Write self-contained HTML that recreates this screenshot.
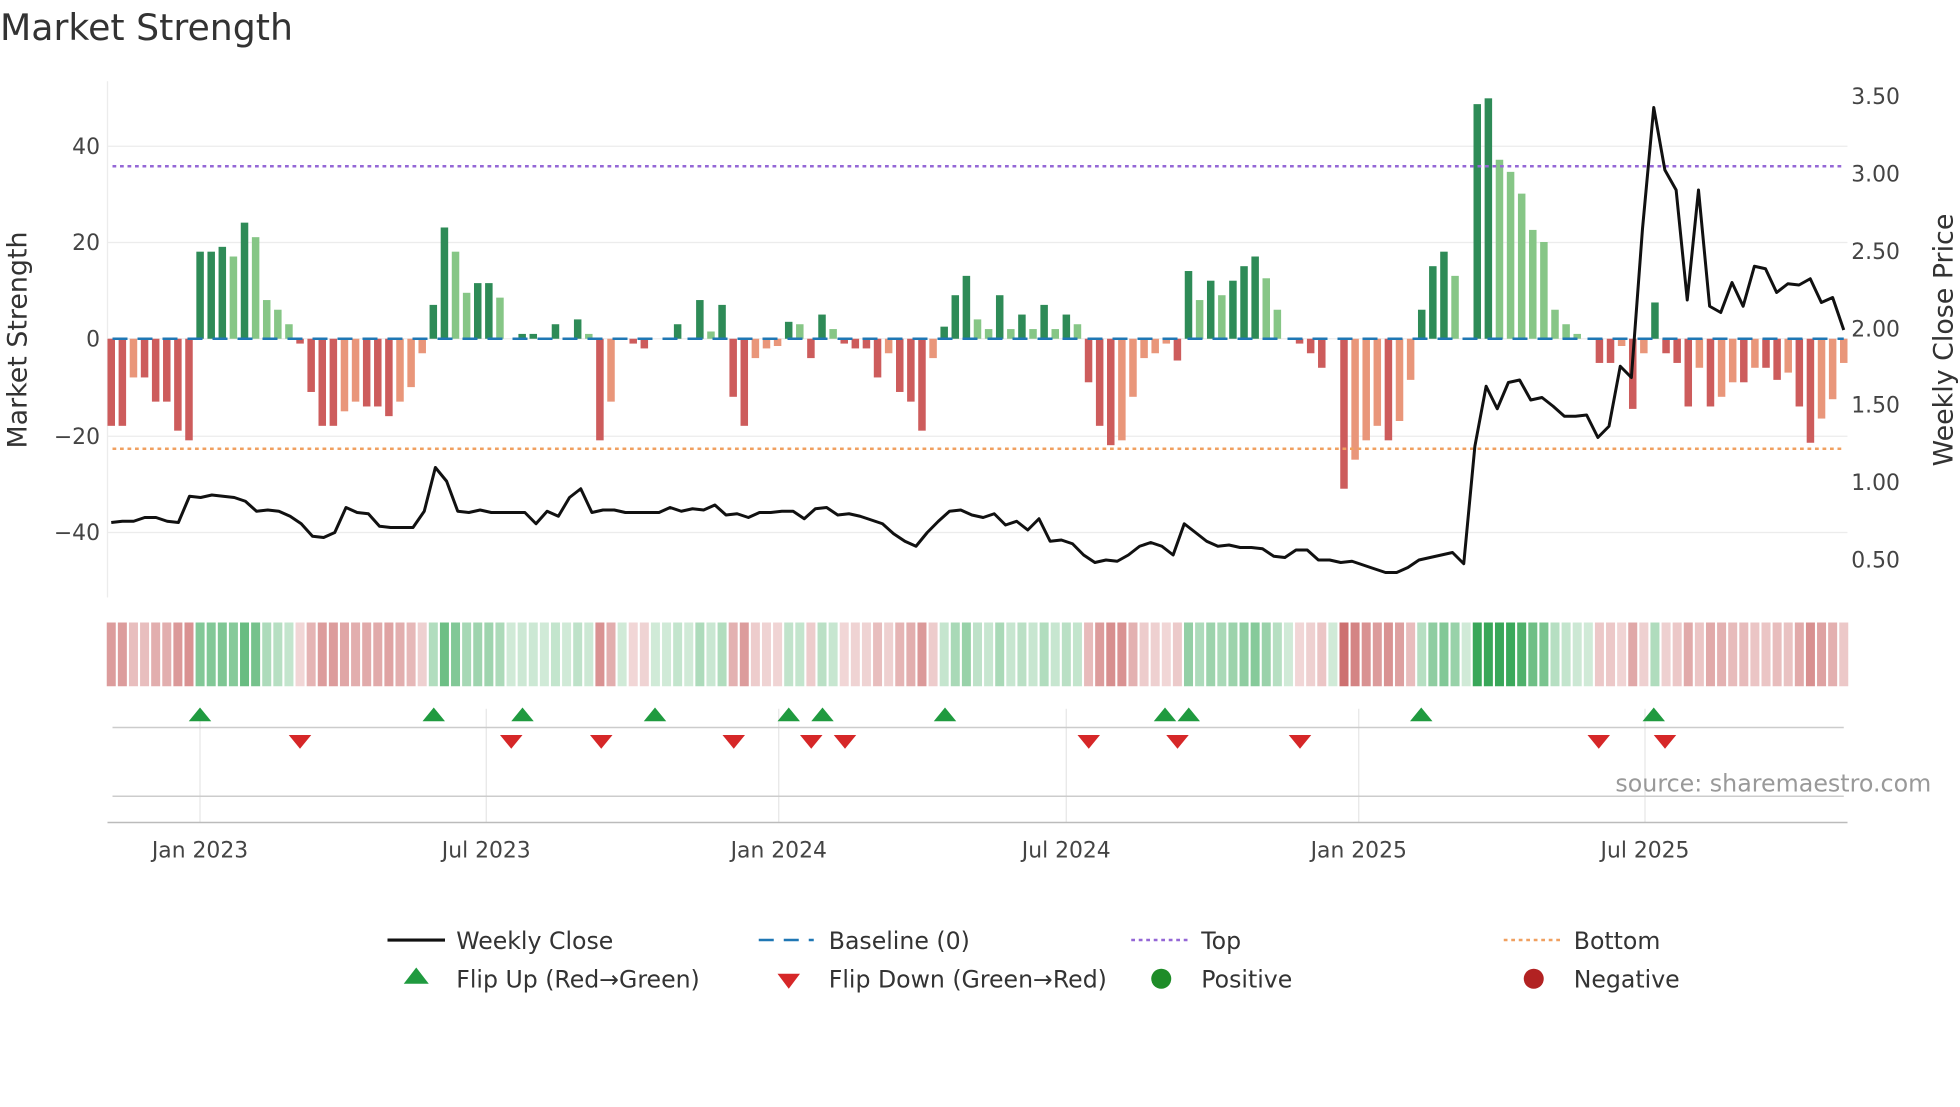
<!DOCTYPE html>
<html><head><meta charset="utf-8">
<style>
html,body{margin:0;padding:0;background:#fff;}
body{width:1960px;height:1102px;overflow:hidden;font-family:"Liberation Sans","DejaVu Sans",sans-serif;}
svg text{font-family:"DejaVu Sans","Liberation Sans",sans-serif;}
</style></head><body>
<svg id="s" width="1960" height="1102" viewBox="0 0 1568 881.6" xmlns="http://www.w3.org/2000/svg">
<rect width="1568" height="882" fill="#fff"/>
<text x="0" y="32" font-size="29" fill="#333">Market Strength</text>
<g id="grid"></g>
<g id="heat"></g>
<g id="bars"></g>
<g id="lines"></g>
<g id="marks"></g>
<g font-size="17.5" fill="#444">
<text x="80" y="123" text-anchor="end">40</text>
<text x="80" y="200" text-anchor="end">20</text>
<text x="80" y="277" text-anchor="end">0</text>
<text x="80" y="355" text-anchor="end">−20</text>
<text x="80" y="432" text-anchor="end">−40</text>
<text x="1481" y="83">3.50</text>
<text x="1481" y="145">3.00</text>
<text x="1481" y="207">2.50</text>
<text x="1481" y="269">2.00</text>
<text x="1481" y="330">1.50</text>
<text x="1481" y="392">1.00</text>
<text x="1481" y="454">0.50</text>
<text x="160" y="686" text-anchor="middle">Jan 2023</text>
<text x="389" y="686" text-anchor="middle">Jul 2023</text>
<text x="623" y="686" text-anchor="middle">Jan 2024</text>
<text x="853" y="686" text-anchor="middle">Jul 2024</text>
<text x="1087" y="686" text-anchor="middle">Jan 2025</text>
<text x="1316" y="686" text-anchor="middle">Jul 2025</text>
</g>
<text transform="translate(21,272) rotate(-90)" font-size="21.5" fill="#333" text-anchor="middle">Market Strength</text>
<text transform="translate(1562,272) rotate(-90)" font-size="21.5" fill="#333" text-anchor="middle">Weekly Close Price</text>
<text x="1545" y="633" font-size="19" fill="#999" text-anchor="end">source: sharemaestro.com</text>
<g font-size="18.9" fill="#333">
<line x1="310" y1="752" x2="356" y2="752" stroke="#111" stroke-width="2.5"/>
<text x="365" y="759">Weekly Close</text>
<line x1="607" y1="752" x2="651" y2="752" stroke="#1f77b4" stroke-width="2" stroke-dasharray="12,8"/>
<text x="663" y="759">Baseline (0)</text>
<line x1="905" y1="752" x2="950" y2="752" stroke="#9467d6" stroke-width="2" stroke-dasharray="3,3"/>
<text x="961" y="759">Top</text>
<line x1="1203" y1="752" x2="1248" y2="752" stroke="#f0a060" stroke-width="2" stroke-dasharray="3,3"/>
<text x="1259" y="759">Bottom</text>
<polygon points="333,774 343,787 323,787" fill="#1f9a3f"/>
<text x="365" y="790">Flip Up (Red→Green)</text>
<polygon points="622,779 640,779 631,791" fill="#d62728"/>
<text x="663" y="790">Flip Down (Green→Red)</text>
<circle cx="929" cy="783" r="8" fill="#1e8c28"/>
<text x="961" y="790">Positive</text>
<circle cx="1227" cy="783" r="8" fill="#b22222"/>
<text x="1259" y="790">Negative</text>
</g>
</svg>
<script>
var NS="http://www.w3.org/2000/svg";
function el(p,t,a){var e=document.createElementNS(NS,t);for(var k in a)e.setAttribute(k,a[k]);document.getElementById(p).appendChild(e);return e;}
var V=[-18,-18,-8,-8,-13,-13,-19,-21,18,18,19,17,24,21,8,6,3,-1,-11,-18,-18,-15,-13,-14,-14,-16,-13,-10,-3,7,23,18,9.5,11.5,11.5,8.5,0,1,1,0,3,0,4,1,-21,-13,0,-1,-2,0,0,3,0,8,1.5,7,-12,-18,-4,-2,-1.5,3.5,3,-4,5,2,-1,-2,-2,-8,-3,-11,-13,-19,-4,2.5,9,13,4,2,9,2,5,2,7,2,5,3,-9,-18,-22,-21,-12,-4,-3,-1,-4.5,14,8,12,9,12,15,17,12.5,6,0,-1,-3,-6,0,-31,-25,-21,-18,-21,-17,-8.5,6,15,18,13,0,48.5,49.7,37,34.5,30,22.5,20,6,3,1,0,-5,-5,-1.5,-14.5,-3,7.5,-3,-5,-14,-6,-14,-12,-9,-9,-6,-6,-8.5,-7,-14,-21.5,-16.5,-12.5,-5];
var n=V.length,x0=89,x1=1475,dx=(x1-x0)/(n-1),y0=271,k=3.87;
[117,194,271,349,426].forEach(function(y){el("grid","line",{x1:86,x2:1478,y1:y,y2:y,stroke:"#ececec","stroke-width":1});});
el("grid","line",{x1:86,x2:86,y1:65,y2:478,stroke:"#ececec"});
[160,389,623,853,1087,1316].forEach(function(x){el("grid","line",{x1:x,x2:x,y1:567,y2:658,stroke:"#e6e6e6"});});
el("grid","line",{x1:90,x2:1475,y1:582,y2:582,stroke:"#ccc","stroke-width":1.2});
el("grid","line",{x1:90,x2:1475,y1:637,y2:637,stroke:"#ccc","stroke-width":1.2});
el("grid","line",{x1:86,x2:1478,y1:658,y2:658,stroke:"#bbb","stroke-width":1.2});
for(var i=0;i<n;i++){var v=V[i],p=i?V[i-1]:v,x=x0+dx*i,c;
 if(v>0)c=(v>=p)?"#2e8b57":"#86c686";else c=(v<=p)?"#cd5c5c":"#e9967a";
 if(v!=0)el("bars","rect",{x:x-3,y:v>0?y0-v*k:y0,width:6,height:Math.abs(v)*k,fill:c});
 var a=0.22+0.7*Math.min(Math.abs(v)/35,1),hc=v>=0?"rgba(40,160,75,"+a+")":"rgba(195,85,85,"+a+")";
 el("heat","rect",{x:x-3.6,y:498,width:7.2,height:51,fill:hc});
}
el("lines","line",{x1:90,x2:1475,y1:271,y2:271,stroke:"#1f77b4","stroke-width":2,"stroke-dasharray":"12,8"});
el("lines","line",{x1:90,x2:1475,y1:133,y2:133,stroke:"#9467d6","stroke-width":2,"stroke-dasharray":"3,3"});
el("lines","line",{x1:90,x2:1475,y1:359,y2:359,stroke:"#f0a060","stroke-width":2,"stroke-dasharray":"3,3"});
var Y=[418,417,417,414,414,417,418,397,398,396,397,398,401,409,408,409,413,419,429,430,426,406,410,411,421,422,422,422,409,374,385,409,410,408,410,410,410,410,419,409,413,398,391,410,408,408,410,410,410,410,406,409,407,408,404,412,411,414,410,410,409,409,415,407,406,412,411,413,416,419,427,433,437,426,417,409,408,412,414,411,420,417,424,415,433,432,435,444,450,448,449,444,437,434,437,444,419,426,433,437,436,438,438,439,445,446,440,440,448,448,450,449,452,455,458,458,454,448,446,444,442,451,357,309,327,306,304,320,318,325,333,333,332,350,341,293,302,183,86,136,152,240,152,245,250,226,245,213,215,234,227,228,223,242,238,264];
var pts=[];for(var j=0;j<Y.length;j++)pts.push((x0+(x1-x0)*j/(Y.length-1)).toFixed(1)+","+Y[j]);
el("lines","polyline",{points:pts.join(" "),fill:"none",stroke:"#111","stroke-width":2.4,"stroke-linejoin":"round"});
[160,347,418,524,631,658,756,932,951,1137,1323].forEach(function(x){el("marks","polygon",{points:x+",566 "+(x+9)+",577 "+(x-9)+",577",fill:"#1f9a3f"});});
[240,409,481,587,649,676,871,942,1040,1279,1332].forEach(function(x){el("marks","polygon",{points:(x-9)+",588 "+(x+9)+",588 "+x+",599",fill:"#d62728"});});
</script>
</body></html>
